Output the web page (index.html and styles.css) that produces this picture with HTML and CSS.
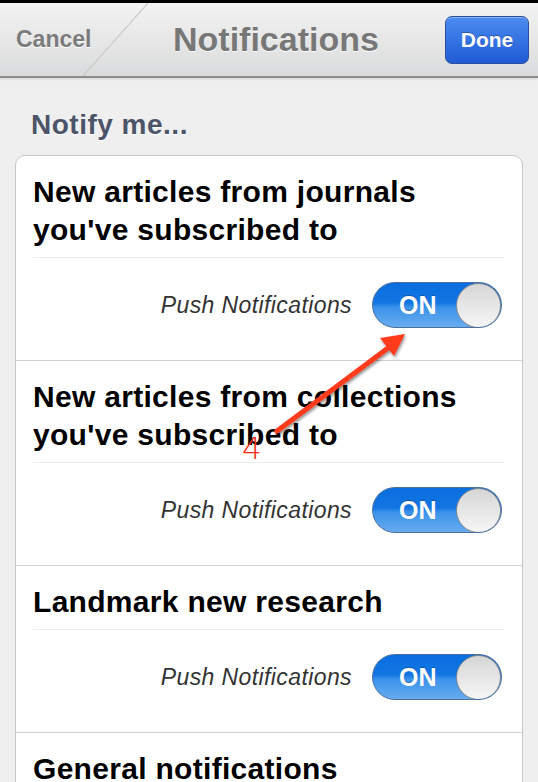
FILE: index.html
```html
<!DOCTYPE html>
<html lang="en">
<head>
  <meta charset="UTF-8">
  <meta name="viewport" content="width=device-width, initial-scale=1.0">
  <title>Notifications</title>
  <link rel="stylesheet" href="styles.css">
</head>
<body>
  <div class="status"></div>

  <!-- top navigation bar -->
  <header class="navbar">
    <div class="nav-cancel">
      <span>Cancel</span>
      <div class="nav-slash"></div>
    </div>
    <h1 class="nav-title">Notifications</h1>
    <button class="nav-done">Done</button>
  </header>

  <main class="content">
    <h2 class="group-title">Notify me...</h2>

    <div class="card">
      <section class="item">
        <h3 class="item-title">New articles from journals<br>you've subscribed to</h3>
        <div class="item-row">
          <span class="row-label">Push Notifications</span>
          <div class="switch"><span class="switch-on">ON</span><span class="knob"></span></div>
        </div>
      </section>

      <section class="item">
        <h3 class="item-title">New articles from collections<br>you've subscribed to</h3>
        <div class="item-row">
          <span class="row-label">Push Notifications</span>
          <div class="switch"><span class="switch-on">ON</span><span class="knob"></span></div>
        </div>
      </section>

      <section class="item">
        <h3 class="item-title">Landmark new research</h3>
        <div class="item-row">
          <span class="row-label">Push Notifications</span>
          <div class="switch"><span class="switch-on">ON</span><span class="knob"></span></div>
        </div>
      </section>

      <section class="item">
        <h3 class="item-title">General notifications</h3>
      </section>
    </div>
  </main>

  <!-- red annotation arrow drawn over the screenshot -->
  <div class="annotation">
    <svg width="538" height="782" viewBox="0 0 538 782">
      <defs>
        <filter id="shadow" x="-20%" y="-20%" width="140%" height="140%">
          <feDropShadow dx="1" dy="2" stdDeviation="1.5" flood-color="#000" flood-opacity="0.45"/>
        </filter>
      </defs>
      <g filter="url(#shadow)">
        <line x1="277" y1="431" x2="388" y2="348" stroke="#ff3b1f" stroke-width="5" stroke-linecap="round"/>
        <polygon points="405,334 380,338 394,356" fill="#ff3b1f"/>
      </g>
    </svg>
    <span class="annotation-num">4</span>
  </div>
</body>
</html>
```

FILE: styles.css
```css
body {
  margin: 0;
  background: #efefef;
  font-family: "Liberation Sans", Arial, sans-serif;
  overflow: hidden;
}

.status {
  height: 3px;
  background: #000;
}

/* nav bar */
.navbar {
  display: flex;
  align-items: center;
  height: 73px;
  background: linear-gradient(#f3f3f3, #dadbdc);
  border-bottom: 2px solid #8c8c8c;
  box-shadow: 0 1px 2px rgba(0, 0, 0, 0.12);
}

.nav-cancel {
  display: flex;
  align-items: center;
  align-self: stretch;
  width: 148px;
  padding-left: 16px;
  box-sizing: border-box;
}

.nav-cancel span {
  width: 67px;
  font-size: 23px;
  font-weight: bold;
  color: #7b7b7b;
  text-shadow: 0 1px 0 #fff;
}

.nav-slash {
  flex: 1;
  align-self: stretch;
  background: linear-gradient(to bottom right, transparent calc(50% - 1px), #c4c4c4 50%, transparent calc(50% + 1px));
}

.nav-title {
  margin: 0 0 0 25px;
  font-size: 34px;
  font-weight: bold;
  color: #777;
  text-shadow: 0 1px 0 #fff;
}

.nav-done {
  margin-left: auto;
  margin-right: 9px;
  width: 84px;
  height: 48px;
  border: 1px solid #2a4e9a;
  border-radius: 7px;
  background: linear-gradient(#4b8cf0, #1f5bd6);
  box-shadow: inset 0 1px 0 rgba(255, 255, 255, 0.35);
  color: #fff;
  font-family: inherit;
  font-size: 21px;
  font-weight: bold;
  text-shadow: 0 -1px 0 rgba(0, 0, 0, 0.3);
}

/* content */
.content {
  padding: 0 15px;
}

.group-title {
  margin: 32px 0 15px 16px;
  font-size: 28px;
  letter-spacing: 0.5px;
  line-height: 30px;
  color: #4b5468;
  text-shadow: 0 1px 0 #fff;
}

.card {
  background: #fff;
  border: 1px solid #c6c6c6;
  border-radius: 10px;
}

.item {
  padding: 17px 17px 0;
}

.item + .item {
  border-top: 1px solid #d2d2d2;
}

.item-title {
  margin: 0;
  font-size: 30px;
  letter-spacing: 0.3px;
  line-height: 38px;
  color: #000;
  padding-bottom: 8px;
  border-bottom: 1px solid #ececec;
}

.item-row {
  display: flex;
  align-items: center;
  justify-content: flex-end;
  gap: 20px;
  margin-right: 3px;
  padding: 24px 0 32px;
}

.row-label {
  font-size: 23px;
  letter-spacing: 0.4px;
  font-style: italic;
  color: #333;
}

/* ON switch */
.switch {
  display: flex;
  align-items: center;
  width: 130px;
  height: 46px;
  box-sizing: border-box;
  border-radius: 23px;
  border: 1px solid #4a6fa0;
  background: linear-gradient(#0a6ee0 0%, #1275e2 45%, #3b92ea 55%, #68acef 100%);
  overflow: hidden;
}

.switch-on {
  padding-left: 26px;
  font-size: 25px;
  font-weight: bold;
  color: #fff;
  text-shadow: 0 -1px 0 rgba(0, 0, 0, 0.25);
}

.knob {
  margin-left: auto;
  width: 45px;
  height: 45px;
  box-sizing: border-box;
  border-radius: 50%;
  border: 1px solid #8a8a8a;
  background: linear-gradient(#d6d6d6, #f6f6f6);
}

/* annotation overlay */
.annotation {
  position: absolute;
  top: 0;
  left: 0;
  width: 538px;
  height: 782px;
  pointer-events: none;
}

.annotation svg {
  display: block;
}

.annotation-num {
  position: absolute;
  left: 242px;
  top: 430px;
  font-family: "DejaVu Sans", sans-serif;
  font-size: 31px;
  font-weight: 300;
  color: #ff2d10;
}
```
